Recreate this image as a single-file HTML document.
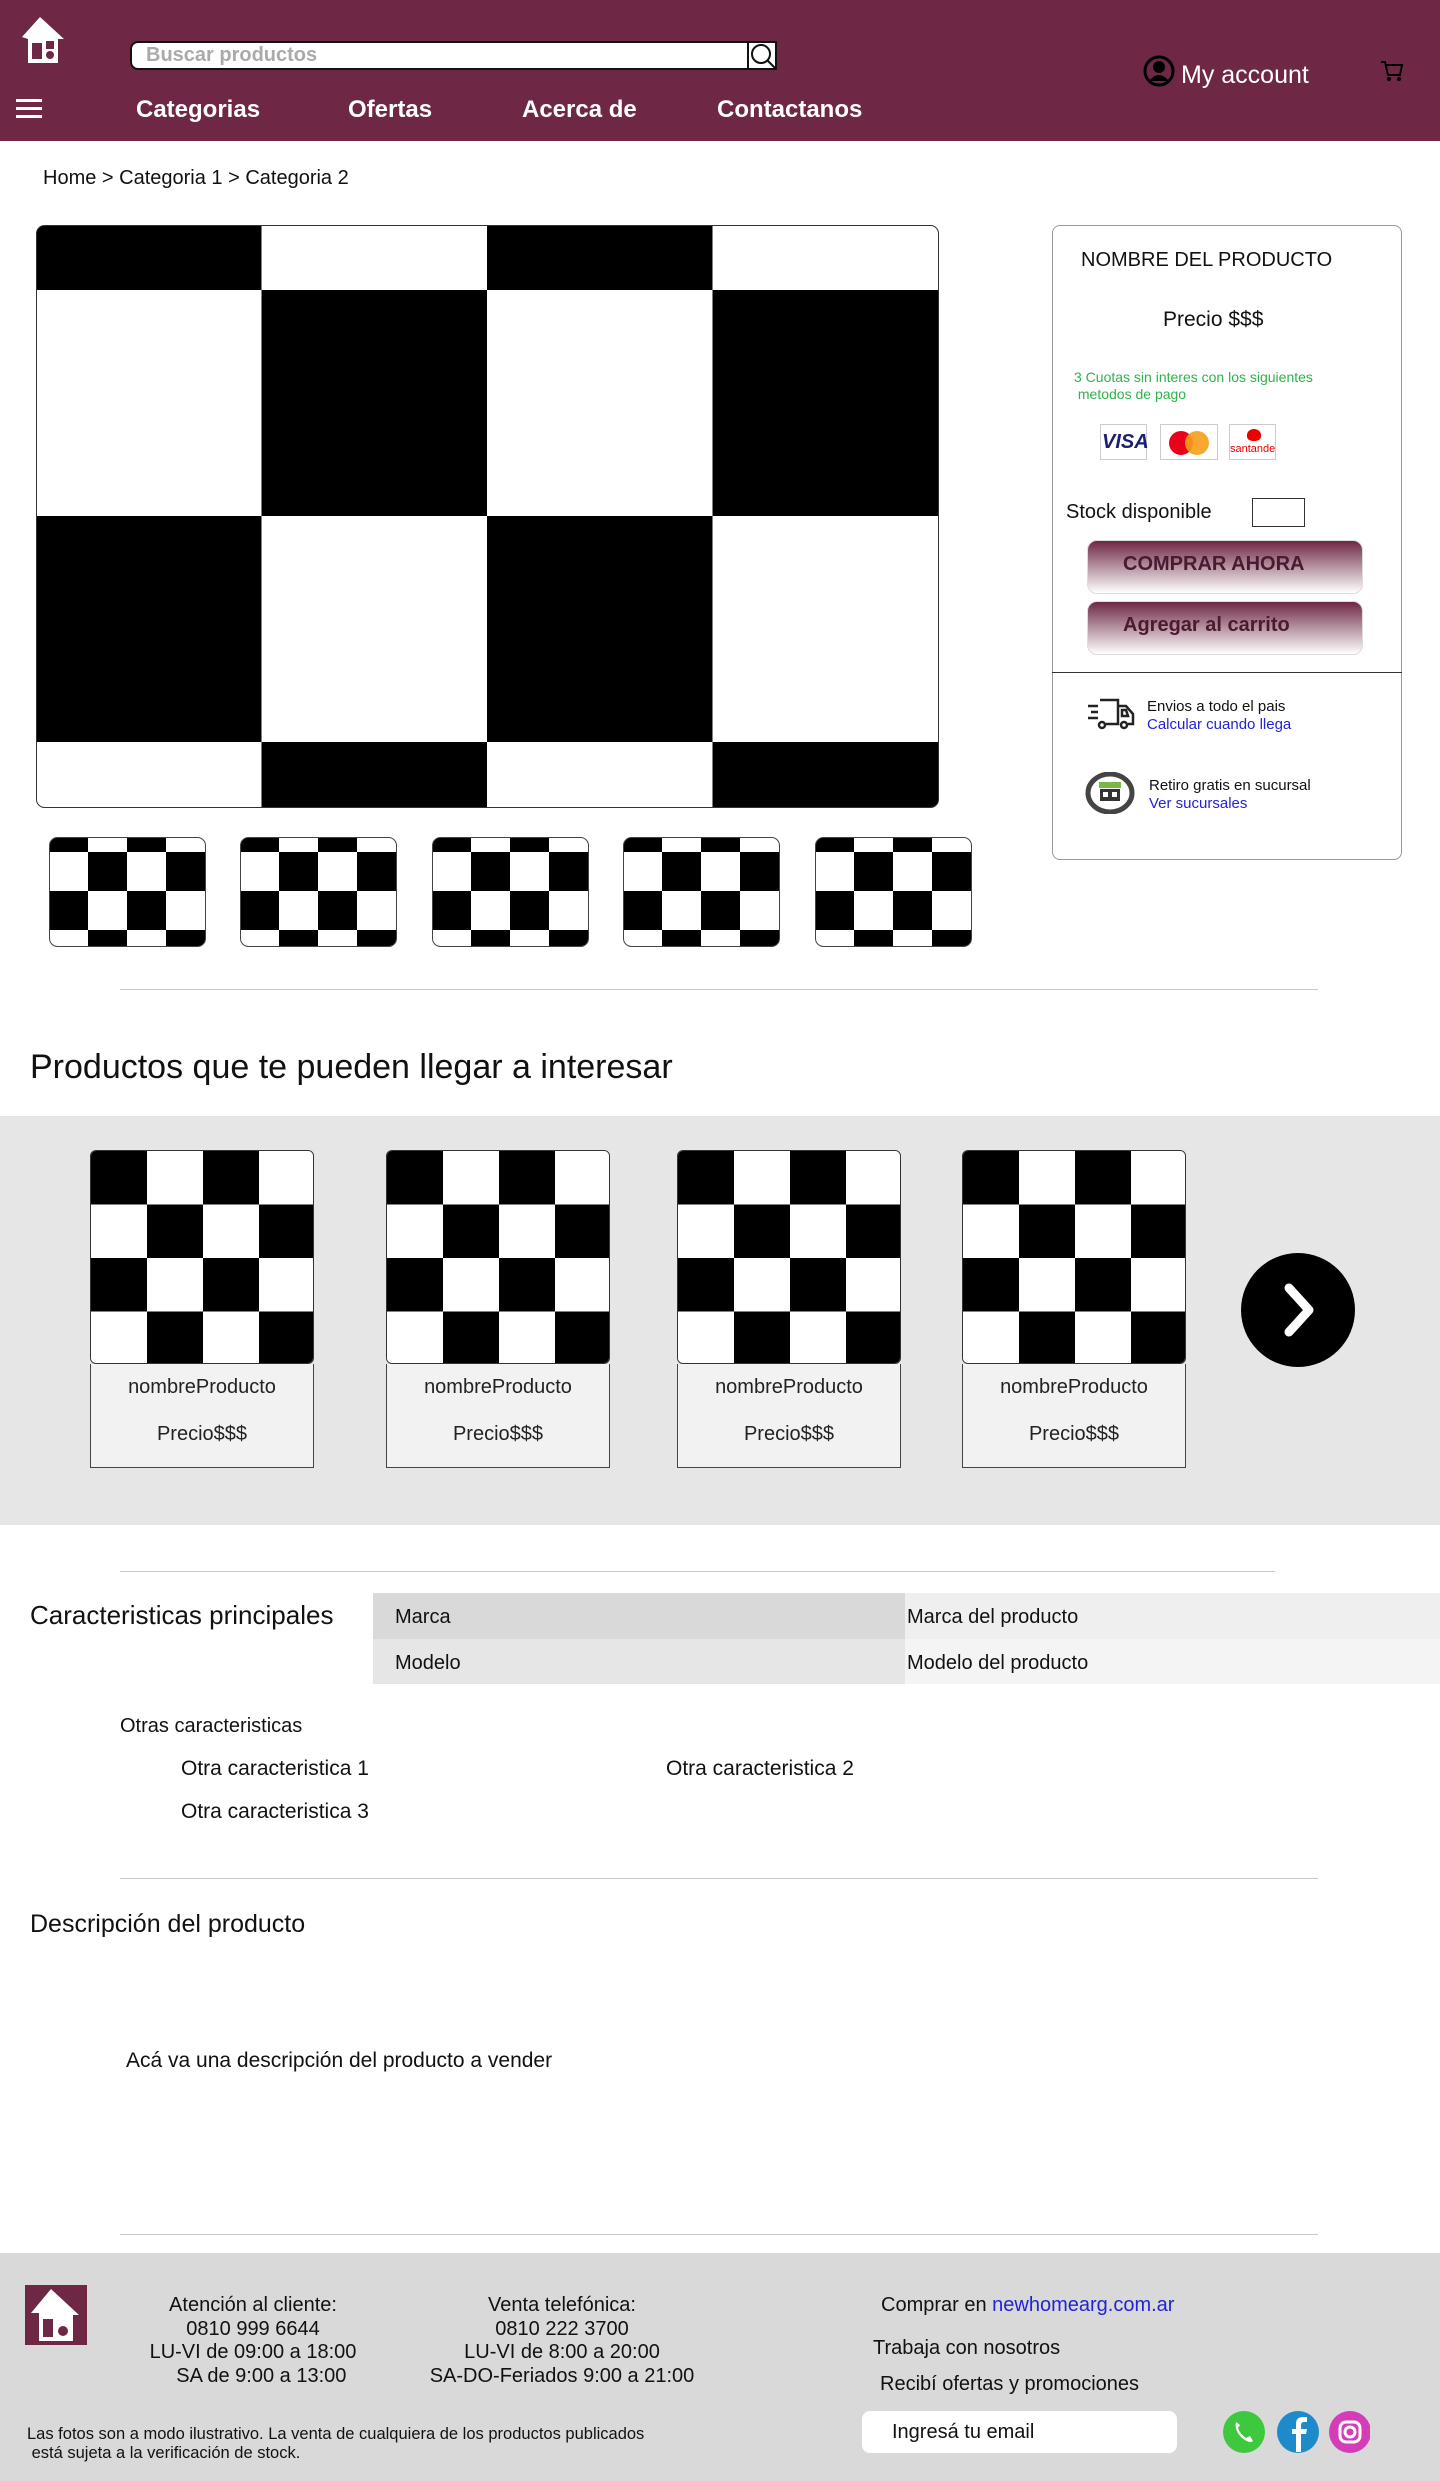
<!DOCTYPE html>
<html><head><meta charset="utf-8"><style>
*{margin:0;padding:0;box-sizing:border-box}
body{width:1440px;height:2481px;position:relative;background:#fff;font-family:"Liberation Sans",sans-serif;color:#111;overflow:hidden}
.a{position:absolute;white-space:nowrap}
.hdr{position:absolute;left:0;top:0;width:1440px;height:141px;background:#6e2845}
.nav{color:#fff;font-size:24px;font-weight:bold;top:96px}
.line{position:absolute;height:1px;background:#c8c8c8}
.card{position:absolute;width:224px}
.card .img{height:214px;border:1px solid #333;border-radius:6px;overflow:hidden}
.card .inf{height:104px;border:1px solid #444;border-top:none;background:#f2f2f2;text-align:center;font-size:20px;color:#222}
.btn{position:absolute;left:1087px;width:276px;height:54px;border-radius:10px;background:linear-gradient(#6e2845,#fff);border:1px solid #ddd;font-size:20px;font-weight:bold;color:#4a1a30;padding:12px 0 0 35px}
.ft{font-size:20px;text-align:center;color:#111}
</style></head><body>
<svg width="0" height="0" style="position:absolute"><defs>
<pattern id="pm" width="451" height="452" patternUnits="userSpaceOnUse" y="-161"><rect width="451" height="452" fill="#fff"/><rect width="225.5" height="226" fill="#000"/><rect x="225.5" y="226" width="225.5" height="226" fill="#000"/></pattern>
<pattern id="pt" width="78" height="78" patternUnits="userSpaceOnUse" y="-24"><rect width="78" height="78" fill="#fff"/><rect width="39" height="39" fill="#000"/><rect x="39" y="39" width="39" height="39" fill="#000"/></pattern>
<pattern id="pc" width="112" height="107" patternUnits="userSpaceOnUse"><rect width="112" height="107" fill="#fff"/><rect width="56" height="53.5" fill="#000"/><rect x="56" y="53.5" width="56" height="53.5" fill="#000"/></pattern>
</defs></svg>

<div class="hdr"></div>
<svg class="a" style="left:18px;top:15px" width="50" height="50" viewBox="0 0 50 50"><path d="M4 22 L22 2 L46 24 L40 24 L40 48 L10 48 L10 24 Z" fill="#fff"/><rect x="14" y="28" width="10" height="16" fill="#6e2845"/><rect x="28" y="26" width="8" height="8" fill="#6e2845"/><circle cx="32" cy="40" r="4" fill="#6e2845"/></svg>
<div class="a" style="left:130px;top:41px;width:647px;height:29px;background:#fff;border:2px solid #111;border-radius:8px 0 0 8px"></div>
<div class="a" style="left:146px;top:44px;font-size:20px;color:#aaa;font-weight:bold">Buscar productos</div>
<div class="a" style="left:747px;top:41px;width:30px;height:29px;border:2px solid #111;background:#fff"></div>
<svg class="a" style="left:749px;top:42px" width="28" height="28"><circle cx="12" cy="12" r="9" fill="none" stroke="#111" stroke-width="2"/><line x1="18" y1="18" x2="27" y2="27" stroke="#111" stroke-width="2"/></svg>
<svg class="a" style="left:16px;top:97px" width="26" height="24"><rect y="2" width="26" height="3" fill="#fff"/><rect y="10" width="26" height="3" fill="#fff"/><rect y="18" width="26" height="3" fill="#fff"/></svg>
<div class="a nav" style="left:136px">Categorias</div>
<div class="a nav" style="left:348px">Ofertas</div>
<div class="a nav" style="left:522px">Acerca de</div>
<div class="a nav" style="left:717px">Contactanos</div>
<svg class="a" style="left:1143px;top:55px" width="32" height="32"><circle cx="16" cy="16" r="14" fill="#6e2845" stroke="#000" stroke-width="3"/><circle cx="16" cy="12" r="6" fill="#000"/><path d="M6 26 Q16 14 26 26" fill="#000"/></svg>
<div class="a" style="left:1181px;top:61px;font-size:25px;color:#fff">My account</div>
<svg class="a" style="left:1380px;top:60px" width="24" height="22"><path d="M1 2 L5 2 L8 15 L20 15 L22 5 L6 5" fill="none" stroke="#000" stroke-width="2"/><circle cx="9" cy="19" r="2"/><circle cx="19" cy="19" r="2"/></svg>

<div class="a" style="left:43px;top:167px;font-size:20px">Home &gt; Categoria 1 &gt; Categoria 2</div>

<svg class="a" style="left:36px;top:225px" width="903" height="583"><rect x="0.5" y="0.5" width="902" height="582" rx="8" fill="url(#pm)" stroke="#333"/></svg>
<svg class="a" style="left:49px;top:837px" width="157" height="110"><rect x="0.5" y="0.5" width="156" height="109" rx="8" fill="url(#pt)" stroke="#444"/></svg>
<svg class="a" style="left:240px;top:837px" width="157" height="110"><rect x="0.5" y="0.5" width="156" height="109" rx="8" fill="url(#pt)" stroke="#444"/></svg>
<svg class="a" style="left:432px;top:837px" width="157" height="110"><rect x="0.5" y="0.5" width="156" height="109" rx="8" fill="url(#pt)" stroke="#444"/></svg>
<svg class="a" style="left:623px;top:837px" width="157" height="110"><rect x="0.5" y="0.5" width="156" height="109" rx="8" fill="url(#pt)" stroke="#444"/></svg>
<svg class="a" style="left:815px;top:837px" width="157" height="110"><rect x="0.5" y="0.5" width="156" height="109" rx="8" fill="url(#pt)" stroke="#444"/></svg>

<div class="a" style="left:1052px;top:225px;width:350px;height:635px;border:1px solid #999;border-radius:8px"></div>
<div class="a" style="left:1081px;top:249px;font-size:20px">NOMBRE DEL PRODUCTO</div>
<div class="a" style="left:1163px;top:308px;font-size:21px">Precio $$$</div>
<div class="a" style="left:1074px;top:369px;font-size:14px;color:#2db34a;line-height:17px">3 Cuotas sin interes con los siguientes<br>&nbsp;metodos de pago</div>
<div class="a" style="left:1100px;top:424px;width:47px;height:36px;border:1px solid #ccc;font:italic bold 20px 'Liberation Sans';color:#1a1f71;padding:6px 0 0 1px">VISA</div>
<div class="a" style="left:1160px;top:424px;width:58px;height:36px;border:1px solid #ccc"><div class="a" style="left:8px;top:6px;width:24px;height:24px;border-radius:50%;background:#eb001b"></div><div class="a" style="left:24px;top:6px;width:24px;height:24px;border-radius:50%;background:#f79e1b;opacity:.9"></div></div>
<div class="a" style="left:1229px;top:424px;width:47px;height:36px;border:1px solid #ccc;overflow:hidden"><div class="a" style="left:17px;top:4px;width:14px;height:12px;border-radius:50% 50% 40% 40%;background:#ec0000"></div><div class="a" style="left:0;top:18px;font-size:11px;color:#ec0000">santander</div></div>
<div class="a" style="left:1066px;top:501px;font-size:20px">Stock disponible</div>
<div class="a" style="left:1252px;top:498px;width:53px;height:29px;border:1px solid #333"></div>
<div class="btn" style="top:540px">COMPRAR AHORA</div>
<div class="btn" style="top:601px">Agregar al carrito</div>
<div class="a" style="left:1052px;top:672px;width:350px;height:1px;background:#333"></div>
<svg class="a" style="left:1086px;top:696px" width="50" height="36" viewBox="0 0 50 36"><g fill="none" stroke="#222" stroke-width="2.5"><path d="M14 4 L32 4 L32 28 L20 28"/><path d="M32 10 L40 10 L47 18 L47 28 L42 28"/><path d="M36 14 L40 14 L42 20 L36 20Z"/><circle cx="16" cy="29" r="3"/><circle cx="38" cy="29" r="3"/><path d="M2 10 H12 M5 16 H12 M2 22 H12"/></g></svg>
<div class="a" style="left:1147px;top:698px;font-size:15px">Envios a todo el pais</div>
<div class="a" style="left:1147px;top:716px;font-size:15px;color:#2323d6">Calcular cuando llega</div>
<svg class="a" style="left:1085px;top:772px" width="50" height="42"><ellipse cx="25" cy="21" rx="22" ry="19" fill="#fff" stroke="#444" stroke-width="5"/><rect x="14" y="10" width="22" height="6" fill="#7ab648"/><rect x="15" y="17" width="20" height="12" fill="#333"/><rect x="18" y="20" width="5" height="5" fill="#fff"/><rect x="27" y="20" width="5" height="5" fill="#fff"/></svg>
<div class="a" style="left:1149px;top:777px;font-size:15px">Retiro gratis en sucursal</div>
<div class="a" style="left:1149px;top:795px;font-size:15px;color:#2323d6">Ver sucursales</div>

<div class="line" style="left:120px;top:989px;width:1198px"></div>
<div class="a" style="left:30px;top:1048px;font-size:34px">Productos que te pueden llegar a interesar</div>
<div class="a" style="left:0;top:1116px;width:1440px;height:409px;background:#e6e6e6"></div>
<div class="card" style="left:90px;top:1150px"><svg class="img" width="224" height="214" style="display:block"><rect width="224" height="214" fill="url(#pc)"/></svg><div class="inf"><div style="padding-top:12px">nombreProducto</div><div style="padding-top:24px">Precio$$$</div></div></div>
<div class="card" style="left:386px;top:1150px"><svg class="img" width="224" height="214" style="display:block"><rect width="224" height="214" fill="url(#pc)"/></svg><div class="inf"><div style="padding-top:12px">nombreProducto</div><div style="padding-top:24px">Precio$$$</div></div></div>
<div class="card" style="left:677px;top:1150px"><svg class="img" width="224" height="214" style="display:block"><rect width="224" height="214" fill="url(#pc)"/></svg><div class="inf"><div style="padding-top:12px">nombreProducto</div><div style="padding-top:24px">Precio$$$</div></div></div>
<div class="card" style="left:962px;top:1150px"><svg class="img" width="224" height="214" style="display:block"><rect width="224" height="214" fill="url(#pc)"/></svg><div class="inf"><div style="padding-top:12px">nombreProducto</div><div style="padding-top:24px">Precio$$$</div></div></div>
<svg class="a" style="left:1241px;top:1253px" width="114" height="114"><circle cx="57" cy="57" r="57" fill="#000"/><path d="M48 35 L68 57 L48 79" fill="none" stroke="#fff" stroke-width="9" stroke-linecap="round" stroke-linejoin="round"/></svg>

<div class="line" style="left:120px;top:1571px;width:1155px"></div>
<div class="a" style="left:30px;top:1600px;font-size:26px">Caracteristicas principales</div>
<div class="a" style="left:373px;top:1593px;width:532px;height:46px;background:#d9d9d9"></div>
<div class="a" style="left:905px;top:1593px;width:535px;height:46px;background:#efefef"></div>
<div class="a" style="left:373px;top:1639px;width:532px;height:45px;background:#e6e6e6"></div>
<div class="a" style="left:905px;top:1639px;width:535px;height:45px;background:#f4f4f4"></div>
<div class="a" style="left:395px;top:1606px;font-size:20px">Marca</div>
<div class="a" style="left:907px;top:1606px;font-size:20px">Marca del producto</div>
<div class="a" style="left:395px;top:1652px;font-size:20px">Modelo</div>
<div class="a" style="left:907px;top:1652px;font-size:20px">Modelo del producto</div>
<div class="a" style="left:120px;top:1715px;font-size:20px">Otras caracteristicas</div>
<div class="a" style="left:181px;top:1757px;font-size:21px">Otra caracteristica 1</div>
<div class="a" style="left:666px;top:1757px;font-size:21px">Otra caracteristica 2</div>
<div class="a" style="left:181px;top:1800px;font-size:21px">Otra caracteristica 3</div>
<div class="line" style="left:120px;top:1878px;width:1198px"></div>
<div class="a" style="left:30px;top:1910px;font-size:25px">Descripción del producto</div>
<div class="a" style="left:126px;top:2049px;font-size:21px">Acá va una descripción del producto a vender</div>
<div class="line" style="left:120px;top:2234px;width:1198px"></div>

<div class="a" style="left:0;top:2253px;width:1440px;height:228px;background:#d9d9d9"></div>
<svg class="a" style="left:25px;top:2285px" width="62" height="60" viewBox="0 0 62 60"><rect width="62" height="60" fill="#6e2845"/><path d="M6 28 L26 4 L54 30 L48 30 L48 56 L14 56 L14 28Z" fill="#fff"/><rect x="18" y="34" width="10" height="18" fill="#6e2845"/><circle cx="38" cy="46" r="5" fill="#6e2845"/></svg>
<div class="a ft" style="left:133px;top:2294px;width:240px;line-height:23.6px">Atención al cliente:<br>0810 999 6644<br>LU-VI de 09:00 a 18:00<br>&nbsp;&nbsp;&nbsp;SA de 9:00 a 13:00</div>
<div class="a ft" style="left:412px;top:2294px;width:300px;line-height:23.6px">Venta telefónica:<br>0810 222 3700<br>LU-VI de 8:00 a 20:00<br>SA-DO-Feriados 9:00 a 21:00</div>
<div class="a" style="left:881px;top:2294px;font-size:20px">Comprar en <span style="color:#2323d6">newhomearg.com.ar</span></div>
<div class="a" style="left:873px;top:2337px;font-size:20px">Trabaja con nosotros</div>
<div class="a" style="left:880px;top:2373px;font-size:20px">Recibí ofertas y promociones</div>
<div class="a" style="left:862px;top:2411px;width:315px;height:42px;background:#fff;border-radius:8px"></div>
<div class="a" style="left:892px;top:2421px;font-size:20px">Ingresá tu email</div>
<div class="a" style="left:27px;top:2425px;font-size:16.5px;line-height:19px">Las fotos son a modo ilustrativo. La venta de cualquiera de los productos publicados<br>&nbsp;está sujeta a la verificación de stock.</div>
<svg class="a" style="left:1220px;top:2408px" width="150" height="50"><circle cx="24" cy="24" r="21" fill="#3ec83e"/><path d="M16 14 Q14 22 22 30 Q30 36 33 33 L30 28 L26 30 Q20 26 18 20 L20 17Z" fill="#fff"/><circle cx="78" cy="24" r="21" fill="#1d8ac9"/><path d="M81 44 L81 26 L86 26 L87 21 L81 21 L81 17 Q81 14 84 14 L87 14 L87 9 L83 9 Q76 9 76 16 L76 21 L72 21 L72 26 L76 26 L76 44Z" fill="#fff"/><circle cx="130" cy="24" r="21" fill="#d43cb8"/><rect x="120" y="14" width="20" height="20" rx="6" fill="none" stroke="#fff" stroke-width="3"/><circle cx="130" cy="24" r="5" fill="none" stroke="#fff" stroke-width="3"/></svg>
</body></html>
